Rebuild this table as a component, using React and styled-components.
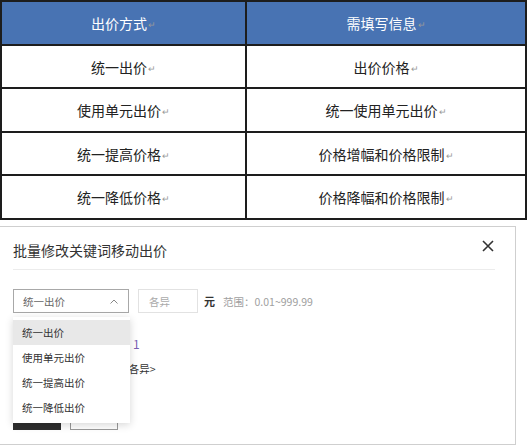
import React from 'react';
import styled, { createGlobalStyle } from 'styled-components';

const GlobalStyle = createGlobalStyle`
    body {
        margin: 0;
        background: #fff;
        font-family: "Noto Sans CJK SC", "Noto Sans", sans-serif;
    }
`;

const rows = [
    ['统一出价', '出价价格'],
    ['使用单元出价', '统一使用单元出价'],
    ['统一提高价格', '价格增幅和价格限制'],
    ['统一降低价格', '价格降幅和价格限制'],
];

const options = ['统一出价', '使用单元出价', '统一提高出价', '统一降低出价'];

export default function App() {
    return (
        <>
            <GlobalStyle />
            <Page>
                <Table>
                    <Cell head>出价方式<Mark>↵</Mark></Cell>
                    <Cell head>需填写信息<Mark>↵</Mark></Cell>
                    {rows.map(([a, b], i) => (
                        <React.Fragment key={i}>
                            <Cell>{a}<Mark>↵</Mark></Cell>
                            <Cell>{b}<Mark>↵</Mark></Cell>
                        </React.Fragment>
                    ))}
                </Table>

                <Dialog>
                    <Header>
                        <h3>批量修改关键词移动出价</h3>
                        <Close viewBox="0 0 12 12">
                            <path d="M1 1 L11 11 M11 1 L1 11" />
                        </Close>
                    </Header>

                    <Form>
                        <SelectWrap>
                            <Select>
                                <span>统一出价</span>
                                <svg width="8" height="5" viewBox="0 0 8 5">
                                    <path d="M0.5 4.5 L4 1 L7.5 4.5" fill="none" stroke="#888" strokeWidth="1" />
                                </svg>
                            </Select>
                            <Menu>
                                {options.map((o, i) => (
                                    <Option key={o} active={i === 0}>{o}</Option>
                                ))}
                            </Menu>
                        </SelectWrap>
                        <Input placeholder="各异" />
                        <Unit>元</Unit>
                        <Range>范围：0.01~999.99</Range>
                    </Form>

                    <Info>
                        <InfoRow labelWidth={120}>
                            <label>已选关键词：</label>
                            <Count>1</Count>
                        </InfoRow>
                        <InfoRow labelWidth={110}>
                            <label>当前出价：</label>
                            <span>&lt;各异&gt;</span>
                        </InfoRow>
                    </Info>

                    <Buttons>
                        <Button primary>确定</Button>
                        <Button>取消</Button>
                    </Buttons>
                </Dialog>
            </Page>
        </>
    );
}

const Page = styled.div`
    width: 529px;
`;

const Table = styled.div`
    width: 523px;
    display: grid;
    grid-template-columns: 243px 1fr;
    grid-template-rows: 42px 41px 42px 41px 42px;
    gap: 2px;
    padding: 2px;
    background: #1d1d1d;
`;

const Cell = styled.div`
    display: flex;
    align-items: center;
    justify-content: center;
    font-size: 14px;
    background: ${p => (p.head ? '#4873b3' : '#fff')};
    color: ${p => (p.head ? '#fff' : '#222')};
`;

const Mark = styled.span`
    font-size: 9px;
    color: #999;
    margin-left: 1px;
    margin-top: 3px;
`;

const Dialog = styled.div`
    margin-top: 6px;
    width: 482px;
    height: 217px;
    border: 1px solid #cfcfcf;
    border-left: none;
    padding: 0 20px 0 13px;
    position: relative;
`;

const Header = styled.div`
    display: flex;
    align-items: center;
    justify-content: space-between;
    height: 42px;
    border-bottom: 1px solid #ececec;
    h3 {
        margin: 0;
        font-size: 14px;
        font-weight: 400;
        color: #333;
        padding-top: 3px;
    }
`;

const Close = styled.svg`
    width: 12px;
    height: 12px;
    margin-right: 1px;
    margin-top: -4px;
    path {
        stroke: #333;
        stroke-width: 1.6;
        fill: none;
    }
`;

const Form = styled.div`
    display: flex;
    align-items: center;
    margin-top: 19px;
    height: 24px;
`;

const SelectWrap = styled.div`
    position: relative;
`;

const Select = styled.div`
    width: 116px;
    height: 24px;
    box-sizing: border-box;
    border: 1px solid #a8a8a8;
    display: flex;
    align-items: center;
    justify-content: space-between;
    padding: 0 10px 0 9px;
    font-size: 10.5px;
    color: #666;
`;

const Menu = styled.div`
    position: absolute;
    top: 28px;
    left: 0;
    width: 117px;
    padding: 3px 0 3px;
    background: #fff;
    box-shadow: 0 2px 8px rgba(0, 0, 0, 0.16);
    z-index: 2;
`;

const Option = styled.div`
    height: 25px;
    display: flex;
    align-items: center;
    padding-left: 9px;
    font-size: 10.5px;
    color: #333;
    background: ${p => (p.active ? '#e8e8e8' : '#fff')};
`;

const Input = styled.input`
    width: 60px;
    height: 24px;
    box-sizing: border-box;
    margin-left: 9px;
    border: 1px solid #e2e2e2;
    padding: 0 0 0 10px;
    font-family: inherit;
    font-size: 10.5px;
    outline: none;
    &::placeholder {
        color: #aaa;
    }
`;

const Unit = styled.span`
    margin-left: 6px;
    font-size: 11px;
    font-weight: 700;
    color: #333;
`;

const Range = styled.span`
    margin-left: 8px;
    font-size: 10.5px;
    color: #a0a0a0;
`;

const Info = styled.div`
    margin-top: 18px;
    display: flex;
    flex-direction: column;
`;

const InfoRow = styled.div`
    display: flex;
    align-items: center;
    height: 25px;
    font-size: 10.5px;
    color: #333;
    label {
        width: ${p => p.labelWidth}px;
    }
`;

const Count = styled.span`
    font-size: 12px;
    color: #7a5fb3;
`;

const Buttons = styled.div`
    display: flex;
    gap: 9px;
    margin-top: 21px;
`;

const Button = styled.button`
    width: 48px;
    height: 28px;
    box-sizing: border-box;
    font-family: inherit;
    font-size: 11px;
    border: 1px solid ${p => (p.primary ? '#2f2f2f' : '#999')};
    background: ${p => (p.primary ? '#2f2f2f' : '#fff')};
    color: ${p => (p.primary ? '#fff' : '#333')};
    padding: 0;
`;
